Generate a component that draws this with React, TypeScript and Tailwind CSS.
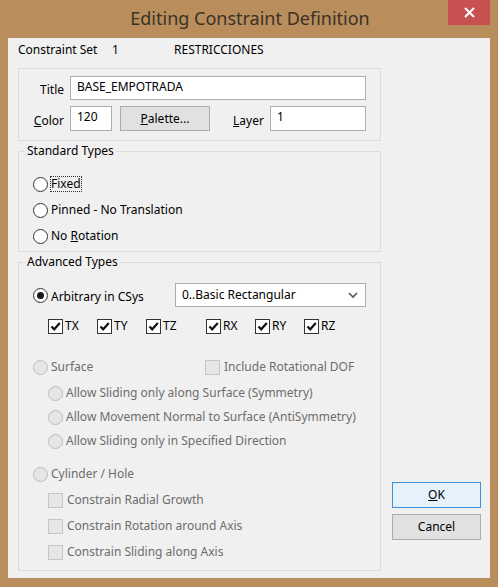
import React from 'react'

const font = { fontFamily: '"Noto Sans", "Open Sans", sans-serif' }

function Radio({ checked = false, disabled = false }: { checked?: boolean; disabled?: boolean }) {
  return (
    <span
      className={`flex h-[15px] w-[15px] shrink-0 items-center justify-center rounded-full border ${
        disabled ? 'border-[#bcbcbc] bg-[#e6e6e6]' : 'border-[#333333] bg-white'
      }`}
    >
      {checked && <span className="h-[7px] w-[7px] rounded-full bg-[#1a1a1a]" />}
    </span>
  )
}

function Check({ checked = false, disabled = false }: { checked?: boolean; disabled?: boolean }) {
  return (
    <span
      className={`flex h-[15px] w-[15px] shrink-0 items-center justify-center border ${
        disabled ? 'border-[#c6c6c6] bg-[#e6e6e6]' : 'border-[#333333] bg-white'
      }`}
    >
      {checked && (
        <svg width="13" height="13" viewBox="0 0 13 13">
          <path d="M2.5 6.5 L5.2 9.3 L10.8 3" fill="none" stroke="#111" strokeWidth="2.2" />
        </svg>
      )}
    </span>
  )
}

function Group({ label, children, className = '' }: { label: string; children: React.ReactNode; className?: string }) {
  return (
    <fieldset className="mt-[2px] border border-[#dcdcdc]">
      <legend className="ml-[6px] px-[2px] text-[12px] leading-[16px] text-black">{label}</legend>
      <div className={className}>{children}</div>
    </fieldset>
  )
}

export default function App() {
  const axes = ['TX', 'TY', 'TZ', 'RX', 'RY', 'RZ']
  return (
    <div style={font} className="flex h-[587px] w-[498px] flex-col bg-[#b98e5c] text-[12px] text-black">
      {/* title bar */}
      <div className="relative flex h-[38px] shrink-0 items-start">
        <div className="flex h-[36px] flex-1 items-center justify-center pl-[2px] text-[18px] text-[#3a3226]">
          Editing Constraint Definition
        </div>
        <div className="absolute left-[448px] top-0 flex h-[25px] w-[42px] items-center justify-center bg-[#c75050]">
          <svg width="11" height="11" viewBox="0 0 11 11">
            <path d="M1 1 L10 10 M10 1 L1 10" stroke="#fff" strokeWidth="2" />
          </svg>
        </div>
      </div>

      {/* client area */}
      <div className="mx-[8px] mb-[9px] flex flex-1 bg-[#f0f0f0]">
        {/* left column */}
        <div className="ml-[10px] flex w-[363px] flex-col">
          <div className="mt-[4px] flex h-[16px] items-center leading-[16px]">
            <span className="w-[94px]">Constraint Set</span>
            <span className="w-[62px]">1</span>
            <span>RESTRICCIONES</span>
          </div>

          {/* title / color / layer */}
          <div className="mt-[10px] border border-[#dcdcdc] pb-[9px] pr-[14px] pt-[7px]">
            <div className="flex items-center">
              <span className="mt-[4px] w-[45px] text-right">Title</span>
              <div className="ml-[6px] flex h-[24px] flex-1 items-start border border-[#adadad] bg-white pl-[6px] pt-[2px] leading-[16px]">
                BASE_EMPOTRADA
              </div>
            </div>
            <div className="mt-[6px] flex items-center">
              <span className="mt-[4px] w-[45px] text-right">
                <span className="underline">C</span>olor
              </span>
              <div className="ml-[6px] flex h-[25px] w-[42px] items-start border border-[#adadad] bg-white pl-[6px] pt-[2px] leading-[16px]">
                120
              </div>
              <div className="ml-[8px] flex h-[25px] w-[90px] items-center justify-center border border-[#adadad] bg-[#e1e1e1]">
                <span>
                  <span className="underline">P</span>alette...
                </span>
              </div>
              <span className="ml-[23px] mt-[4px]">
                <span className="underline">L</span>ayer
              </span>
              <div className="ml-[6px] flex h-[25px] flex-1 items-start border border-[#adadad] bg-white pl-[6px] pt-[2px] leading-[16px]">
                1
              </div>
            </div>
          </div>

          {/* standard types */}
          <Group label="Standard Types" className="pb-[2px] pl-[14px] pt-[12px]">
            <div className="flex h-[26px] items-center">
              <Radio />
              <span className="ml-[2px] border border-dotted border-[#333] leading-[14px]">Fixed</span>
            </div>
            <div className="flex h-[26px] items-center">
              <Radio />
              <span className="ml-[3px]">Pinned - No Translation</span>
            </div>
            <div className="flex h-[26px] items-center">
              <Radio />
              <span className="ml-[3px]">
                No <span className="underline">R</span>otation
              </span>
            </div>
          </Group>

          {/* advanced types */}
          <Group label="Advanced Types" className="pb-[5px] pl-[14px] pr-[14px] pt-[13px]">
            <div className="flex h-[24px] items-center">
              <Radio checked />
              <span className="ml-[3px] mt-[4px] w-[124px]">Arbitrary in CSys</span>
              <div className="flex h-[24px] flex-1 items-center justify-between border border-[#acacac] bg-white pl-[6px] pr-[7px]">
                <span>0..Basic Rectangular</span>
                <svg width="10" height="7" viewBox="0 0 10 7">
                  <path d="M1 1 L5 5 L9 1" fill="none" stroke="#555" strokeWidth="1.6" />
                </svg>
              </div>
            </div>
            <div className="ml-[15px] mt-[10px] flex h-[18px] items-center">
              {axes.map((a, i) => (
                <div key={a} className={`flex w-[49px] items-center ${i === 3 ? 'ml-[11px]' : ''}`}>
                  <Check checked />
                  <span className="ml-[2px]">{a}</span>
                </div>
              ))}
            </div>

            <div className="mt-[20px] flex h-[24px] items-center text-[#6d6d6d]">
              <Radio disabled />
              <span className="ml-[3px] w-[154px]">Surface</span>
              <Check disabled />
              <span className="ml-[4px]">Include Rotational DOF</span>
            </div>
            <div className="ml-[15px] mt-[2px] text-[#6d6d6d]">
              {[
                'Allow Sliding only along Surface (Symmetry)',
                'Allow Movement Normal to Surface (AntiSymmetry)',
                'Allow Sliding only in Specified Direction',
              ].map((t) => (
                <div key={t} className="flex h-[24px] items-center">
                  <Radio disabled />
                  <span className="ml-[3px]">{t}</span>
                </div>
              ))}
            </div>

            <div className="mt-[9px] flex h-[24px] items-center text-[#6d6d6d]">
              <Radio disabled />
              <span className="ml-[3px]">Cylinder / Hole</span>
            </div>
            <div className="ml-[15px] mt-[1px] text-[#6d6d6d]">
              {['Constrain Radial Growth', 'Constrain Rotation around Axis', 'Constrain Sliding along Axis'].map((t) => (
                <div key={t} className="flex h-[26px] items-center">
                  <Check disabled />
                  <span className="ml-[4px]">{t}</span>
                </div>
              ))}
            </div>
          </Group>
        </div>

        {/* buttons */}
        <div className="ml-[11px] flex w-[89px] flex-col justify-end pb-[38px]">
          <div className="flex h-[26px] items-center justify-center border border-[#3c8fdc] bg-[#e5f1fb]">
            <span>
              <span className="underline">O</span>K
            </span>
          </div>
          <div className="mt-[6px] flex h-[26px] items-center justify-center border border-[#adadad] bg-[#e1e1e1]">
            Cancel
          </div>
        </div>
      </div>
    </div>
  )
}
